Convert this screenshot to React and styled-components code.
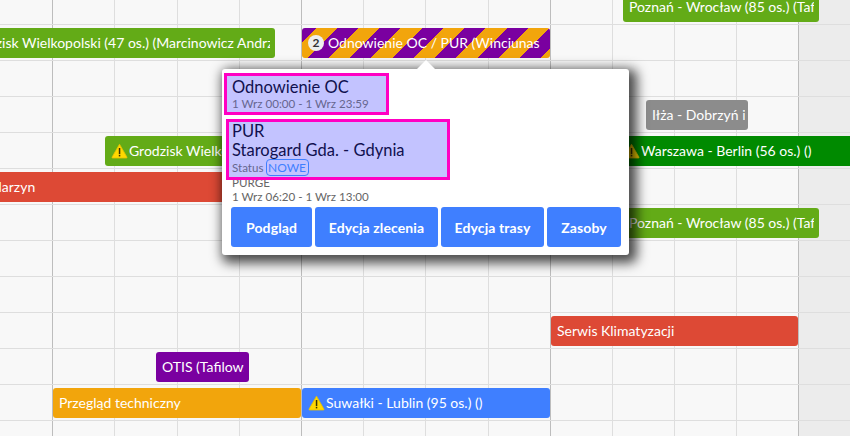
import React from "react";
import styled, { createGlobalStyle } from "styled-components";

const Global = createGlobalStyle`
  html, body { margin: 0; padding: 0; background: #f8f8f8; overflow: hidden; }
  body { font-family: Lato, "Noto Sans", sans-serif; }
`;

const Timeline = styled.div`
  position: relative;
  width: 850px;
  height: 436px;
  overflow: hidden;
  background: #f8f8f8;
`;

const Columns = styled.div`
  position: absolute;
  inset: 0;
  display: flex;
`;

const Column = styled.div`
  box-sizing: border-box;
  flex: ${(p) => (p.$off ? "1" : `0 0 ${p.$w}px`)};
  border-right: ${(p) => (p.$off ? "none" : `1px solid ${p.$major ? "#bdbdbd" : "#dedede"}`)};
  background: ${(p) => (p.$off ? "#ececec" : "transparent")};
`;

const Rows = styled.div`
  position: relative;
  display: flex;
  flex-direction: column;
`;

const Row = styled.div`
  position: relative;
  box-sizing: border-box;
  flex: 0 0 ${(p) => p.$h || 36}px;
  border-bottom: 1px solid #dedede;
`;

const palette = {
  green: "#63ab17",
  dark: "#008a00",
  red: "#dd4935",
  gray: "#8c8c8c",
  purple: "#7a00a0",
  orange: "#f2a50c",
  blue: "#3f7fff",
  stripes:
    "repeating-linear-gradient(135deg, #f2a50c -5px, #7a00a0 -5px, #7a00a0 10px, #f2a50c 10px, #f2a50c 25px, #7a00a0 25px)",
};

const Bar = styled.div`
  position: absolute;
  left: ${(p) => p.$x}px;
  top: ${(p) => (p.$top === undefined ? 3 : p.$top)}px;
  width: ${(p) => p.$w}px;
  height: 30px;
  box-sizing: border-box;
  padding: 0 ${(p) => p.$pr || 5}px 0 6px;
  display: flex;
  align-items: center;
  gap: 1px;
  border-radius: ${(p) => (p.$square ? "0" : "3px")};
  background: ${(p) => palette[p.$kind]};
  color: #fff;
  font-size: 14px;
  line-height: 30px;
  white-space: nowrap;
`;

const Label = styled.span`
  overflow: hidden;
  flex: 1;
  min-width: 0;
`;

const CountBadge = styled.span`
  flex: 0 0 16px;
  height: 16px;
  margin-right: 3px;
  border-radius: 50%;
  background: #eeeeee;
  color: #333;
  font-size: 12px;
  font-weight: 700;
  line-height: 16px;
  text-align: center;
`;

const WarnSvg = styled.svg`
  flex: 0 0 17px;
  width: 17px;
  height: 16px;
`;

const Warning = () => (
  <WarnSvg viewBox="0 0 17 16">
    <path d="M8.5 1.2 L16 14.2 Q16.2 15 15.4 15 L1.6 15 Q0.8 15 1 14.2 Z" fill="#ffd800" stroke="#e8c200" strokeWidth="0.8" strokeLinejoin="round" />
    <rect x="7.8" y="5" width="1.5" height="6" fill="#3a3200" />
    <rect x="7.8" y="11.8" width="1.5" height="1.6" fill="#3a3200" />
  </WarnSvg>
);

const Popover = styled.div`
  position: absolute;
  z-index: 5;
  left: 222px;
  top: 69px;
  width: 407px;
  height: 186px;
  box-sizing: border-box;
  padding: 4px 8px 8px 9px;
  background: #fff;
  border-radius: 3px;
  box-shadow: 4px 4px 12px 4px rgba(0, 0, 0, 0.7);

  &::before {
    content: "";
    position: absolute;
    left: 195px;
    top: -9px;
    border-left: 9px solid transparent;
    border-right: 9px solid transparent;
    border-bottom: 9px solid #fff;
  }
`;

const Highlight = styled.div`
  position: relative;
  z-index: 1;
  box-sizing: border-box;
  width: ${(p) => p.$w}px;
  height: ${(p) => p.$h}px;
  margin: ${(p) => p.$mt}px 0 0 ${(p) => p.$ml}px;
  padding: ${(p) => p.$pt}px 0 0 ${(p) => p.$pl}px;
  border: 3px solid #ff00c3;
  background: #c3c3ff;
  color: #10104e;
`;

const Title = styled.div`
  font-size: 16.5px;
  line-height: 19px;
`;

const Sub = styled.div`
  font-size: 11.6px;
  line-height: 14px;
  color: #66668f;
`;

const StatusRow = styled.div`
  display: flex;
  align-items: center;
  gap: 2px;
  height: 17px;
  margin-top: -1px;
  font-size: 11.6px;
  color: #66668f;
`;

const Pill = styled.span`
  box-sizing: border-box;
  height: 17px;
  padding: 0 1.5px;
  border: 1px solid #3f7fff;
  border-radius: 4px;
  font-size: 12px;
  line-height: 15px;
  color: #3f7fff;
`;

const Plain = styled.div`
  height: 28px;
  margin: -4px 0 0 1px;
  font-size: 11.6px;
  line-height: 13.5px;
  color: #666;
`;

const Actions = styled.div`
  display: flex;
  gap: 3px;
  margin-top: 3px;
`;

const ActionButton = styled.button`
  box-sizing: border-box;
  width: ${(p) => p.$w}px;
  height: 40px;
  padding: 0;
  border: 0;
  border-radius: 3px;
  background: #3f7fff;
  color: #fff;
  font-family: inherit;
  font-size: 14px;
  font-weight: 700;
  letter-spacing: 0.1px;
`;

const majors = [52, 301, 550, 798];
const lines = [52, 114, 177, 239, 301, 363, 425, 488, 550, 612, 674, 736, 798];

export default function App() {
  return (
    <Timeline>
      <Global />
      <Columns>
        {lines.map((x, i) => (
          <Column key={x} $w={x + 1 - (i ? lines[i - 1] + 1 : 0)} $major={majors.includes(x)} />
        ))}
        <Column $off />
      </Columns>
      <Rows>
        <Row $h={25}>
          <Bar $kind="green" $x={623} $w={196} $top={-8}>
            <Label>Poznań - Wrocław (85 os.) (Tafilowski)</Label>
          </Bar>
        </Row>
        <Row>
          <Bar $kind="green" $x={-41} $w={316}>
            <Label>Grodzisk Wielkopolski (47 os.) (Marcinowicz Andrzej)</Label>
          </Bar>
          <Bar $kind="stripes" $x={302} $w={248}>
            <CountBadge>2</CountBadge>
            <Label>Odnowienie OC / PUR (Winciunas</Label>
          </Bar>
        </Row>
        <Row />
        <Row>
          <Bar $kind="gray" $x={646} $w={102} $pr={3}>
            <Label>Iłża - Dobrzyń i Wąbrzeźno</Label>
          </Bar>
        </Row>
        <Row>
          <Bar $kind="green" $x={105} $w={200}>
            <Warning />
            <Label>Grodzisk Wielkopolski</Label>
          </Bar>
          <Bar $kind="dark" $x={617} $w={243} $square>
            <Warning />
            <Label>Warszawa - Berlin (56 os.) ()</Label>
          </Bar>
        </Row>
        <Row>
          <Bar $kind="red" $x={-17} $w={300} $square>
            <Label>Marzyn</Label>
          </Bar>
        </Row>
        <Row>
          <Bar $kind="green" $x={623} $w={196}>
            <Label>Poznań - Wrocław (85 os.) (Tafilowski)</Label>
          </Bar>
        </Row>
        <Row />
        <Row />
        <Row>
          <Bar $kind="red" $x={551} $w={247}>
            <Label>Serwis Klimatyzacji</Label>
          </Bar>
        </Row>
        <Row>
          <Bar $kind="purple" $x={156} $w={93}>
            <Label>OTIS (Tafilowski)</Label>
          </Bar>
        </Row>
        <Row>
          <Bar $kind="orange" $x={53} $w={248}>
            <Label>Przegląd techniczny</Label>
          </Bar>
          <Bar $kind="blue" $x={302} $w={248}>
            <Warning />
            <Label>Suwałki - Lublin (95 os.) ()</Label>
          </Bar>
        </Row>
        <Row />
      </Rows>
      <Popover>
        <Highlight $w={165} $h={42} $mt={0} $ml={-7} $pt={2} $pl={5}>
          <Title>Odnowienie OC</Title>
          <Sub>1 Wrz 00:00 - 1 Wrz 23:59</Sub>
        </Highlight>
        <Highlight $w={224} $h={61} $mt={4} $ml={-5} $pt={0} $pl={3}>
          <Title>PUR</Title>
          <Title>Starogard Gda. - Gdynia</Title>
          <StatusRow>
            <span>Status</span>
            <Pill>NOWE</Pill>
          </StatusRow>
        </Highlight>
        <Plain>
          <div>PURGE</div>
          <div>1 Wrz 06:20 - 1 Wrz 13:00</div>
        </Plain>
        <Actions>
          <ActionButton $w={81}>Podgląd</ActionButton>
          <ActionButton $w={123}>Edycja zlecenia</ActionButton>
          <ActionButton $w={103}>Edycja trasy</ActionButton>
          <ActionButton $w={74}>Zasoby</ActionButton>
        </Actions>
      </Popover>
    </Timeline>
  );
}
